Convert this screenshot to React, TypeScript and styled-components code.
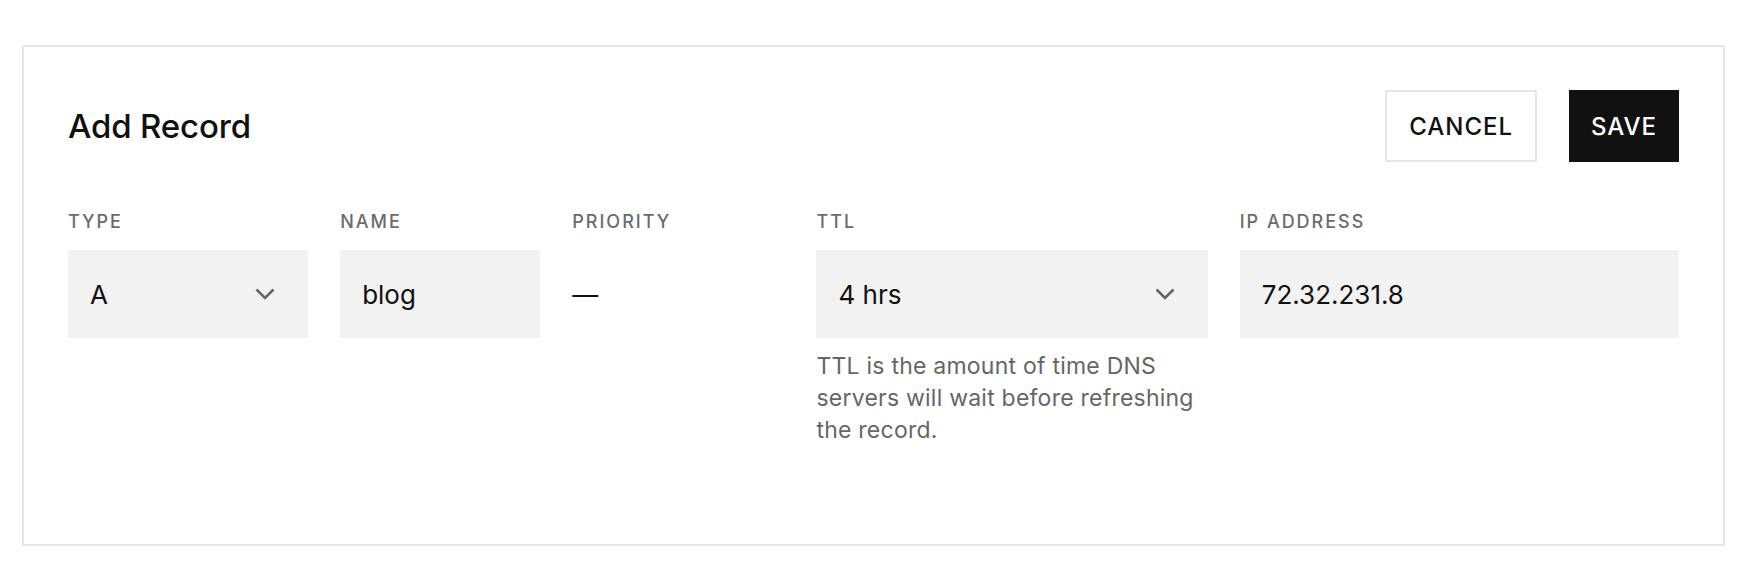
import styled, { createGlobalStyle } from "styled-components";

const GlobalStyle = createGlobalStyle`
  html, body {
    margin: 0;
    background: #ffffff;
  }
  body {
    font-family: Inter, "Liberation Sans", Arial, sans-serif;
    color: #111111;
  }
`;

function Chevron() {
  return (
    <StyledChevron viewBox="0 0 20 12" aria-hidden="true">
      <path d="M1.5 1.5 L10 10 L18.5 1.5" />
    </StyledChevron>
  );
}

export default function App() {
  return (
    <>
      <GlobalStyle />
      <StyledPage>
        <StyledCard>
          <StyledHeader>
            <StyledTitle>Add Record</StyledTitle>
            <StyledActions>
              <StyledButton $variant="outline">Cancel</StyledButton>
              <StyledButton $variant="solid">Save</StyledButton>
            </StyledActions>
          </StyledHeader>

          <StyledFields>
            <StyledField>
              <StyledLabel>Type</StyledLabel>
              <StyledInputBox>
                <StyledValue>A</StyledValue>
                <Chevron />
              </StyledInputBox>
            </StyledField>

            <StyledField>
              <StyledLabel>Name</StyledLabel>
              <StyledInputBox>
                <StyledValue>blog</StyledValue>
              </StyledInputBox>
            </StyledField>

            <StyledField>
              <StyledLabel>Priority</StyledLabel>
              <StyledStatic>—</StyledStatic>
            </StyledField>

            <StyledField>
              <StyledLabel>TTL</StyledLabel>
              <StyledInputBox>
                <StyledValue>4 hrs</StyledValue>
                <Chevron />
              </StyledInputBox>
              <StyledHelp>
                TTL is the amount of time DNS servers will wait before
                refreshing the record.
              </StyledHelp>
            </StyledField>

            <StyledField>
              <StyledLabel>IP Address</StyledLabel>
              <StyledInputBox>
                <StyledValue>72.32.231.8</StyledValue>
              </StyledInputBox>
            </StyledField>
          </StyledFields>
        </StyledCard>
      </StyledPage>
    </>
  );
}

const StyledPage = styled.div`
  padding: 45px 27px 31px 22px;
`;

const StyledCard = styled.section`
  border: 2px solid #e6e6e6;
  background: #ffffff;
  padding: 43px 44px 98px 44px;
`;

const StyledHeader = styled.header`
  display: flex;
  align-items: center;
  justify-content: space-between;
  height: 72px;
`;

const StyledTitle = styled.h1`
  margin: 0;
  font-size: 33px;
  font-weight: 500;
  letter-spacing: -0.005em;
`;

const StyledActions = styled.div`
  display: flex;
  gap: 32px;
`;

const StyledButton = styled.button<{ $variant: "outline" | "solid" }>`
  height: 72px;
  padding: 0 ${({ $variant }) => ($variant === "solid" ? "20px" : "22px")};
  font-family: inherit;
  font-size: 24px;
  font-weight: 500;
  letter-spacing: 0.04em;
  text-transform: uppercase;
  cursor: pointer;
  border: 2px solid
    ${({ $variant }) => ($variant === "solid" ? "#111111" : "#e6e6e6")};
  background: ${({ $variant }) => ($variant === "solid" ? "#111111" : "#ffffff")};
  color: ${({ $variant }) => ($variant === "solid" ? "#ffffff" : "#111111")};
`;

const StyledFields = styled.div`
  display: grid;
  grid-template-columns: 240fr 200fr 212fr 391fr 439fr;
  column-gap: 32px;
  margin-top: 48px;
`;

const StyledField = styled.div`
  display: flex;
  flex-direction: column;
  min-width: 0;
`;

const StyledLabel = styled.div`
  font-size: 18px;
  line-height: 24px;
  font-weight: 500;
  letter-spacing: 0.11em;
  text-transform: uppercase;
  color: #6b6b6b;
  margin-bottom: 16px;
`;

const StyledInputBox = styled.div`
  display: flex;
  align-items: center;
  justify-content: space-between;
  height: 88px;
  padding: 0 33px 0 22px;
  background: #f2f2f2;
`;

const StyledValue = styled.span`
  font-size: 26px;
  color: #111111;
`;

const StyledStatic = styled.div`
  display: flex;
  align-items: center;
  height: 88px;
  font-size: 26px;
  color: #111111;
`;

const StyledChevron = styled.svg`
  width: 20px;
  height: 12px;
  fill: none;
  stroke: #666666;
  stroke-width: 2.6;
`;

const StyledHelp = styled.p`
  margin: 12px 0 0;
  font-size: 23px;
  line-height: 32px;
  letter-spacing: 0.01em;
  color: #666666;
`;
